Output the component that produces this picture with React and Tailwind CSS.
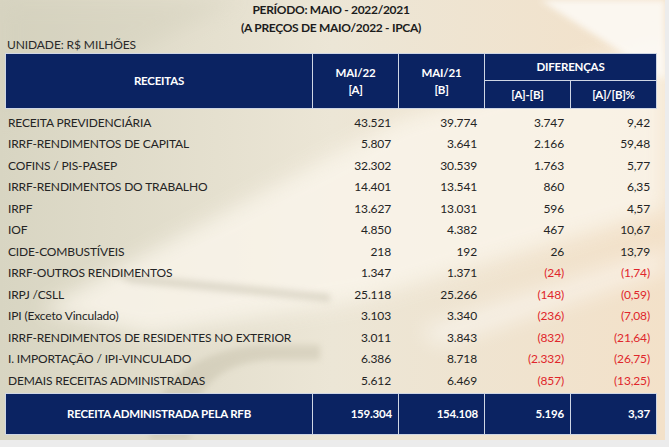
import React from "react";

const rows = [
  ["RECEITA PREVIDENCIÁRIA", "43.521", "39.774", "3.747", "9,42"],
  ["IRRF-RENDIMENTOS DE CAPITAL", "5.807", "3.641", "2.166", "59,48"],
  ["COFINS / PIS-PASEP", "32.302", "30.539", "1.763", "5,77"],
  ["IRRF-RENDIMENTOS DO TRABALHO", "14.401", "13.541", "860", "6,35"],
  ["IRPF", "13.627", "13.031", "596", "4,57"],
  ["IOF", "4.850", "4.382", "467", "10,67"],
  ["CIDE-COMBUSTÍVEIS", "218", "192", "26", "13,79"],
  ["IRRF-OUTROS RENDIMENTOS", "1.347", "1.371", "(24)", "(1,74)"],
  ["IRPJ /CSLL", "25.118", "25.266", "(148)", "(0,59)"],
  ["IPI (Exceto Vinculado)", "3.103", "3.340", "(236)", "(7,08)"],
  ["IRRF-RENDIMENTOS DE RESIDENTES NO EXTERIOR", "3.011", "3.843", "(832)", "(21,64)"],
  ["I. IMPORTAÇÃO / IPI-VINCULADO", "6.386", "8.718", "(2.332)", "(26,75)"],
  ["DEMAIS RECEITAS ADMINISTRADAS", "5.612", "6.469", "(857)", "(13,25)"],
];

const cols = "grid-cols-[306px_85px_85px_85px_85px]";

const Backdrop = () => (
  <svg className="absolute inset-0" width="665" height="440" viewBox="0 0 665 440">
    <defs>
      <filter id="soft" x="-20%" y="-20%" width="140%" height="140%">
        <feGaussianBlur stdDeviation="10" />
      </filter>
      <filter id="soft2" x="-20%" y="-20%" width="140%" height="140%">
        <feGaussianBlur stdDeviation="3" />
      </filter>
    </defs>
    {/* pale fold across the middle */}
    <polygon points="40,310 400,120 665,40 665,210 360,300 150,335" fill="#fbf6ec" opacity="0.8" filter="url(#soft)" />
    <polygon points="540,0 665,0 665,80" fill="#fdfbf7" opacity="0.85" filter="url(#soft2)" />
    <polygon points="110,272 330,294 330,302 130,283" fill="#b3ad98" opacity="0.35" filter="url(#soft2)" />
    <polygon points="420,330 665,250 665,270 440,345" fill="#ffffff" opacity="0.5" filter="url(#soft)" />
    <path d="M150 440 C150 380 200 350 260 345 L320 345 L320 360 L270 360 C220 362 190 390 190 440 Z" fill="#bfb9a3" opacity="0.4" filter="url(#soft2)" />
    <polygon points="0,0 240,0 0,120" fill="#cfccb8" opacity="0.35" filter="url(#soft)" />
  </svg>
);

export default function App() {
  return (
    <div className="w-[669px] h-[447px] bg-[#ececec] overflow-hidden" style={{ fontFamily: "Lato, 'Open Sans', sans-serif" }}>
      <div className="relative w-[665px] h-[440px] bg-gradient-to-r from-[#d8d5c2] via-[#ece6d6] to-[#f3e1c9] overflow-hidden">
        <Backdrop />
        <div className="relative pl-[5px] text-[#242424]">
          <div className="pt-px text-center font-bold text-[12px] tracking-[-0.3px] leading-[17.5px] text-[#1c1c1c] pr-[8px]">
            <div>PERÍODO: MAIO - 2022/2021</div>
            <div>(A PREÇOS DE MAIO/2022 - IPCA)</div>
          </div>
          <div className="pl-[2px] text-[12px] tracking-[-0.1px] leading-[17px] text-[#2a2a2a]">UNIDADE: R$ MILHÕES</div>

          {/* header */}
          <div className={`grid ${cols} grid-rows-[26px_27px] gap-px p-px bg-[#cfd6e4] w-[652px] text-white font-bold text-[11.5px] tracking-[-0.2px]`}>
            <div className="row-span-2 bg-[#0b2362] flex items-center justify-center">RECEITAS</div>
            <div className="row-span-2 bg-[#0b2362] flex flex-col items-center justify-center leading-[17px]">
              <span>MAI/22</span>
              <span>[A]</span>
            </div>
            <div className="row-span-2 bg-[#0b2362] flex flex-col items-center justify-center leading-[17px]">
              <span>MAI/21</span>
              <span>[B]</span>
            </div>
            <div className="col-span-2 bg-[#0b2362] flex items-center justify-center">DIFERENÇAS</div>
            <div className="bg-[#0b2362] flex items-center justify-center">[A]-[B]</div>
            <div className="bg-[#0b2362] flex items-center justify-center">[A]/[B]%</div>
          </div>

          {/* body */}
          <div className="mt-[4px] w-[652px] text-[12px] tracking-[-0.15px]">
            {rows.map((r) => (
              <div key={r[0]} className={`grid ${cols} gap-px px-px pb-[2px] h-[21.5px] items-center`}>
                <div className="pl-[2px] whitespace-nowrap">{r[0]}</div>
                <div className="text-right pr-[7px]">{r[1]}</div>
                <div className="text-right pr-[7px]">{r[2]}</div>
                <div className={`text-right pr-[6px] ${r[3].startsWith("(") ? "text-[#e0262b]" : ""}`}>{r[3]}</div>
                <div className={`text-right pr-[6px] ${r[4].startsWith("(") ? "text-[#e0262b]" : ""}`}>{r[4]}</div>
              </div>
            ))}
          </div>

          {/* total */}
          <div className={`grid ${cols} h-[42px] gap-px p-px bg-[#cfd6e4] w-[652px] text-white font-bold text-[11.5px] tracking-[-0.2px]`}>
            <div className="bg-[#0b2362] flex items-center justify-center">RECEITA ADMINISTRADA PELA RFB</div>
            <div className="bg-[#0b2362] flex items-center justify-end pr-[6px]">159.304</div>
            <div className="bg-[#0b2362] flex items-center justify-end pr-[6px]">154.108</div>
            <div className="bg-[#0b2362] flex items-center justify-end pr-[6px]">5.196</div>
            <div className="bg-[#0b2362] flex items-center justify-end pr-[6px]">3,37</div>
          </div>
        </div>
      </div>
    </div>
  );
}
